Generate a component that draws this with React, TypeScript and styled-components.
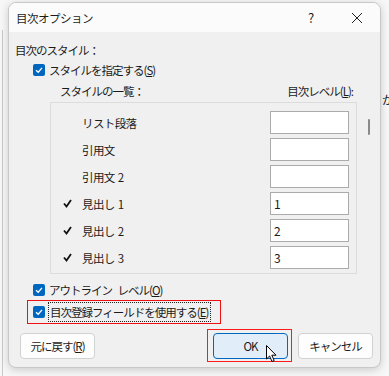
import React from 'react';
import styled, { createGlobalStyle } from 'styled-components';

const font = `"Noto Sans CJK JP", "Noto Sans", sans-serif`;

const GlobalStyle = createGlobalStyle`
  html, body {
    margin: 0;
    padding: 0;
    width: 389px;
    height: 376px;
    overflow: hidden;
    background:
      linear-gradient(to right, transparent 2px, #c9c9c9 2px, #c9c9c9 3px, transparent 3px) 0 30px / 4px 100% no-repeat,
      #f7f7f7;
    font-family: ${font};
  }
`;

const Page = styled.div`
  position: relative;
  padding: 2px 0 0 8px;
`;

const BehindText = styled.span`
  position: absolute;
  left: 382px;
  top: 91px;
  font: 12px ${font};
  color: #222;
`;

const Dialog = styled.div`
  position: relative;
  width: 373px;
  height: 366px;
  box-sizing: border-box;
  border: 1px solid #c8c8c8;
  border-radius: 8px;
  background: #f0f0f0;
  box-shadow: 0 2px 8px rgba(0, 0, 0, 0.18);
  overflow: hidden;
  display: flex;
  flex-direction: column;
  color: #1b1b1b;
  font: 11.5px/18px ${font};
`;

const TitleBar = styled.div`
  height: 29px;
  flex: none;
  background: #fbfbfb;
  display: flex;
  align-items: center;
  padding-left: 7px;
`;

const Title = styled.div`
  flex: 1;
  letter-spacing: -0.5px;
`;

const TitleButton = styled.div<{ $w: number }>`
  width: ${(p) => p.$w}px;
  height: 29px;
  display: flex;
  align-items: center;
  justify-content: center;
  font-size: 13px;
`;

const Body = styled.div`
  flex: 1;
  display: flex;
  flex-direction: column;
  padding: 7px 0 0 6px;
`;

const Label = styled.div`
  height: 21px;
  display: flex;
  align-items: center;
  letter-spacing: -1px;
  white-space: nowrap;
`;

const HeaderRow = styled.div`
  height: 21px;
  display: flex;
  align-items: center;
  justify-content: space-between;
  padding: 0 27px 0 45px;
  letter-spacing: -1px;
`;

const ListArea = styled.div`
  display: flex;
  margin: 1px 0 0 35px;
`;

const ListBox = styled.div`
  width: 307px;
  height: 172px;
  box-sizing: border-box;
  border: 1px solid #dcdcdc;
  padding: 8px 0 0 0;
  display: flex;
  flex-direction: column;
  gap: 4px;
`;

const ScrollTrack = styled.div`
  width: 23px;
  display: flex;
  justify-content: center;
  padding-top: 17px;
`;

const ScrollThumb = styled.div`
  width: 2px;
  height: 16px;
  border-radius: 1px;
  background: #8a8a8a;
`;

const StyleRow = styled.div`
  height: 23px;
  display: flex;
  align-items: center;
`;

const Mark = styled.div`
  width: 31px;
  display: flex;
  justify-content: flex-end;
  padding-right: 10px;
  box-sizing: border-box;
`;

const StyleName = styled.div`
  flex: 1;
  letter-spacing: -0.6px;
  word-spacing: 1px;
  white-space: pre;
`;

const LevelInput = styled.div`
  width: 79px;
  height: 23px;
  box-sizing: border-box;
  border: 1px solid #ababab;
  background: #fff;
  margin-right: 7px;
  padding-left: 3px;
  display: flex;
  align-items: center;
  font-size: 12px;
`;

const CheckRow = styled.div<{ $framed?: boolean }>`
  display: flex;
  align-items: center;
  gap: 4px;
  box-sizing: border-box;
  height: ${(p) => (p.$framed ? 24 : 20)}px;
  width: ${(p) => (p.$framed ? '194px' : 'auto')};
  margin-left: ${(p) => (p.$framed ? 12 : 18)}px;
  padding-left: ${(p) => (p.$framed ? 5 : 0)}px;
  border: ${(p) => (p.$framed ? '1px solid #ee1111' : 'none')};
  letter-spacing: -1px;
  word-spacing: 4px;
  white-space: nowrap;
`;

const Box = styled.div`
  width: 12px;
  height: 12px;
  border-radius: 2px;
  background: #0067c0;
  display: flex;
  align-items: center;
  justify-content: center;
  flex: none;
`;

const FocusText = styled.span`
  outline: 1px dotted #222;
  outline-offset: 0;
  padding: 0 2px 0 1px;
`;

const ButtonRow = styled.div`
  display: flex;
  align-items: center;
  margin-top: 6px;
  padding: 0 7px 0 5px;
`;

const Button = styled.div<{ $primary?: boolean }>`
  position: relative;
  width: 75px;
  height: 26px;
  box-sizing: border-box;
  border: 1px solid ${(p) => (p.$primary ? '#0067c0' : '#d1d1d1')};
  border-radius: 4px;
  background: ${(p) => (p.$primary ? '#e1eef9' : '#fdfdfd')};
  display: flex;
  align-items: center;
  justify-content: center;
  letter-spacing: -1px;
  white-space: nowrap;
`;

const Spacer = styled.div`
  flex: 1;
`;

const RedFrame = styled.div`
  display: flex;
  border: 1px solid #ff1a1a;
  background: #f0f0f0;
  padding: 3px 3px 2px 5px;
  margin-right: 6px;
  margin-top: -1px;
`;

const Cursor = styled.svg`
  position: absolute;
  left: 52px;
  top: 11px;
`;

const Check = () => (
  <svg width="10" height="10" viewBox="0 0 10 10">
    <path d="M2 5.2 L4.2 7.2 L8 2.8" fill="none" stroke="#fff" strokeWidth="1.3" />
  </svg>
);

const ListCheck = () => (
  <svg width="9" height="9" viewBox="0 0 9 9">
    <path d="M1 4.5 L3.5 7.5 L8 1" fill="none" stroke="#111" strokeWidth="1.8" />
  </svg>
);

const rows = [
  { name: 'リスト段落', level: '', on: false },
  { name: '引用文', level: '', on: false },
  { name: '引用文 2', level: '', on: false },
  { name: '見出し 1', level: '1', on: true },
  { name: '見出し 2', level: '2', on: true },
  { name: '見出し 3', level: '3', on: true },
];

const App: React.FC = () => (
  <Page>
    <GlobalStyle />
    <BehindText>か</BehindText>
    <Dialog>
      <TitleBar>
        <Title>目次オプション</Title>
        <TitleButton $w={46}>?</TitleButton>
        <TitleButton $w={46}>
          <svg width="12" height="12" viewBox="0 0 12 12">
            <path d="M1 1 L11 11 M11 1 L1 11" stroke="#222" strokeWidth="1" />
          </svg>
        </TitleButton>
      </TitleBar>
      <Body>
        <Label>目次のスタイル：</Label>
        <CheckRow>
          <Box><Check /></Box>
          <span>スタイルを指定する(<u>S</u>)</span>
        </CheckRow>
        <HeaderRow>
          <span>スタイルの一覧：</span>
          <span>目次レベル(<u>L</u>):</span>
        </HeaderRow>
        <ListArea>
          <ListBox>
            {rows.map((r) => (
              <StyleRow key={r.name}>
                <Mark>{r.on && <ListCheck />}</Mark>
                <StyleName>{r.name}</StyleName>
                <LevelInput>{r.level}</LevelInput>
              </StyleRow>
            ))}
          </ListBox>
          <ScrollTrack>
            <ScrollThumb />
          </ScrollTrack>
        </ListArea>
        <div style={{ height: 6 }} />
        <CheckRow>
          <Box><Check /></Box>
          <span>アウトライン レベル(<u>O</u>)</span>
        </CheckRow>
        <CheckRow $framed>
          <Box><Check /></Box>
          <FocusText>目次登録フィールドを使用する(<u>E</u>)</FocusText>
        </CheckRow>
        <ButtonRow>
          <Button>元に戻す(<u>R</u>)</Button>
          <Spacer />
          <RedFrame>
            <Button $primary>
              OK
              <Cursor width="12" height="18" viewBox="0 0 12 18">
                <path d="M0.5 0.5 L0.5 14 L3.6 11 L6 16.5 L8.2 15.5 L5.8 10.2 L10 10.2 Z" fill="#fff" stroke="#000" strokeWidth="1" />
              </Cursor>
            </Button>
          </RedFrame>
          <Button>キャンセル</Button>
        </ButtonRow>
      </Body>
    </Dialog>
  </Page>
);

export default App;
